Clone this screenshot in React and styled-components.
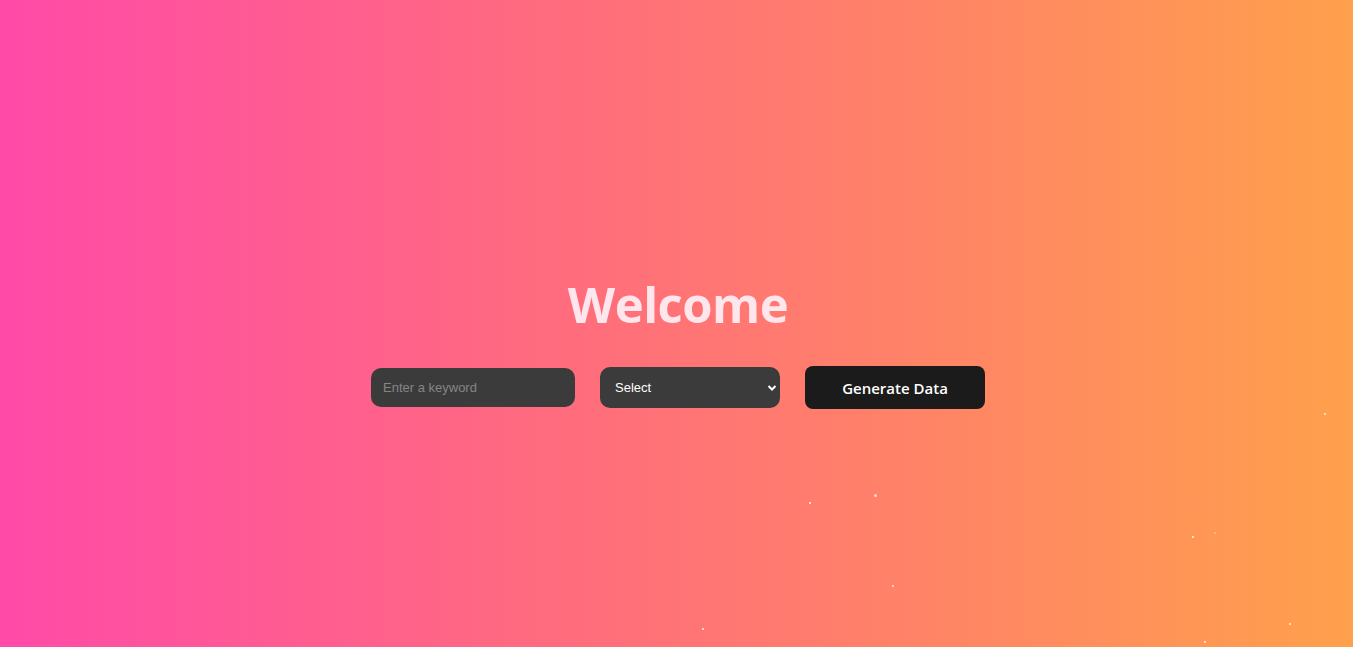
import React from "react";
import styled, { createGlobalStyle } from "styled-components";

const Global = createGlobalStyle`
  html, body { margin: 0; padding: 0; height: 100%; }
  body { font-family: "Open Sans", "Liberation Sans", sans-serif; }
  #root { min-height: 100vh; }
`;

const Page = styled.div`
  position: relative;
  width: 100%;
  height: 100vh;
  overflow: hidden;
  background: linear-gradient(90deg, #ff4aa8 0%, #ff6f7a 45%, #ffa04c 100%);
  display: flex;
  flex-direction: column;
  align-items: center;
  justify-content: center;
`;

const Content = styled.main`
  display: flex;
  flex-direction: column;
  align-items: center;
  gap: 30px;
  margin-left: 3px;
  transform: translateY(17px);
`;

const Title = styled.h1`
  margin: 0;
  font-family: "Open Sans", "Noto Sans", sans-serif;
  font-weight: 700;
  font-size: 49px;
  line-height: 64px;
  letter-spacing: -0.5px;
  color: #ffe6ec;
`;

const Controls = styled.div`
  display: flex;
  align-items: center;
  gap: 25px;
`;

const KeywordInput = styled.input`
  box-sizing: border-box;
  width: 204px;
  height: 39px;
  border: none;
  outline: none;
  border-radius: 10px;
  background: #3b3b3b;
  color: #fff;
  padding: 0 12px;
  font-family: "Liberation Sans", Arial, sans-serif;
  font-size: 13px;
  &::placeholder { color: #858585; }
`;

const SelectBox = styled.select`
  box-sizing: border-box;
  width: 180px;
  height: 41px;
  border: none;
  outline: none;
  border-radius: 10px;
  background-color: #3b3b3b;
  color: #fff;
  padding: 0 28px 0 15px;
  font-family: "Liberation Sans", Arial, sans-serif;
  font-size: 13px;
  appearance: none;
  background-image: url("data:image/svg+xml,%3Csvg xmlns='http://www.w3.org/2000/svg' width='10' height='8' viewBox='0 0 10 8'%3E%3Cpath d='M1.5 2l3.5 3.5L8.5 2' fill='none' stroke='white' stroke-width='2'/%3E%3C/svg%3E");
  background-repeat: no-repeat;
  background-position: right 3px center;
`;

const GenerateButton = styled.button`
  box-sizing: border-box;
  width: 180px;
  height: 43px;
  border: none;
  border-radius: 8px;
  background: #1b1b1b;
  color: #fff;
  font-family: "Open Sans", "Noto Sans", sans-serif;
  font-weight: 600;
  font-size: 15px;
  cursor: pointer;
  padding-top: 2px;
`;

const Dot = styled.span`
  position: absolute;
  width: ${(p) => p.$s}px;
  height: ${(p) => p.$s}px;
  border-radius: 50%;
  background: #fff;
  opacity: ${(p) => p.$o};
`;

const dots = [
  [1324, 413, 2, 0.8],
  [809, 502, 2, 0.95],
  [874, 494, 3, 0.7],
  [1192, 536, 2, 0.95],
  [1214, 532, 2, 0.35],
  [892, 585, 2, 0.8],
  [702, 628, 2, 0.95],
  [1204, 641, 2, 0.95],
  [1289, 623, 2, 0.9],
];

export default function App() {
  return (
    <>
      <Global />
      <Page>
        {dots.map(([x, y, s, o], i) => (
          <Dot key={i} $s={s} $o={o} style={{ left: x, top: y }} />
        ))}
        <Content>
          <Title>Welcome</Title>
          <Controls>
            <KeywordInput placeholder="Enter a keyword" />
            <SelectBox defaultValue="">
              <option value="">Select</option>
            </SelectBox>
            <GenerateButton>Generate Data</GenerateButton>
          </Controls>
        </Content>
      </Page>
    </>
  );
}
